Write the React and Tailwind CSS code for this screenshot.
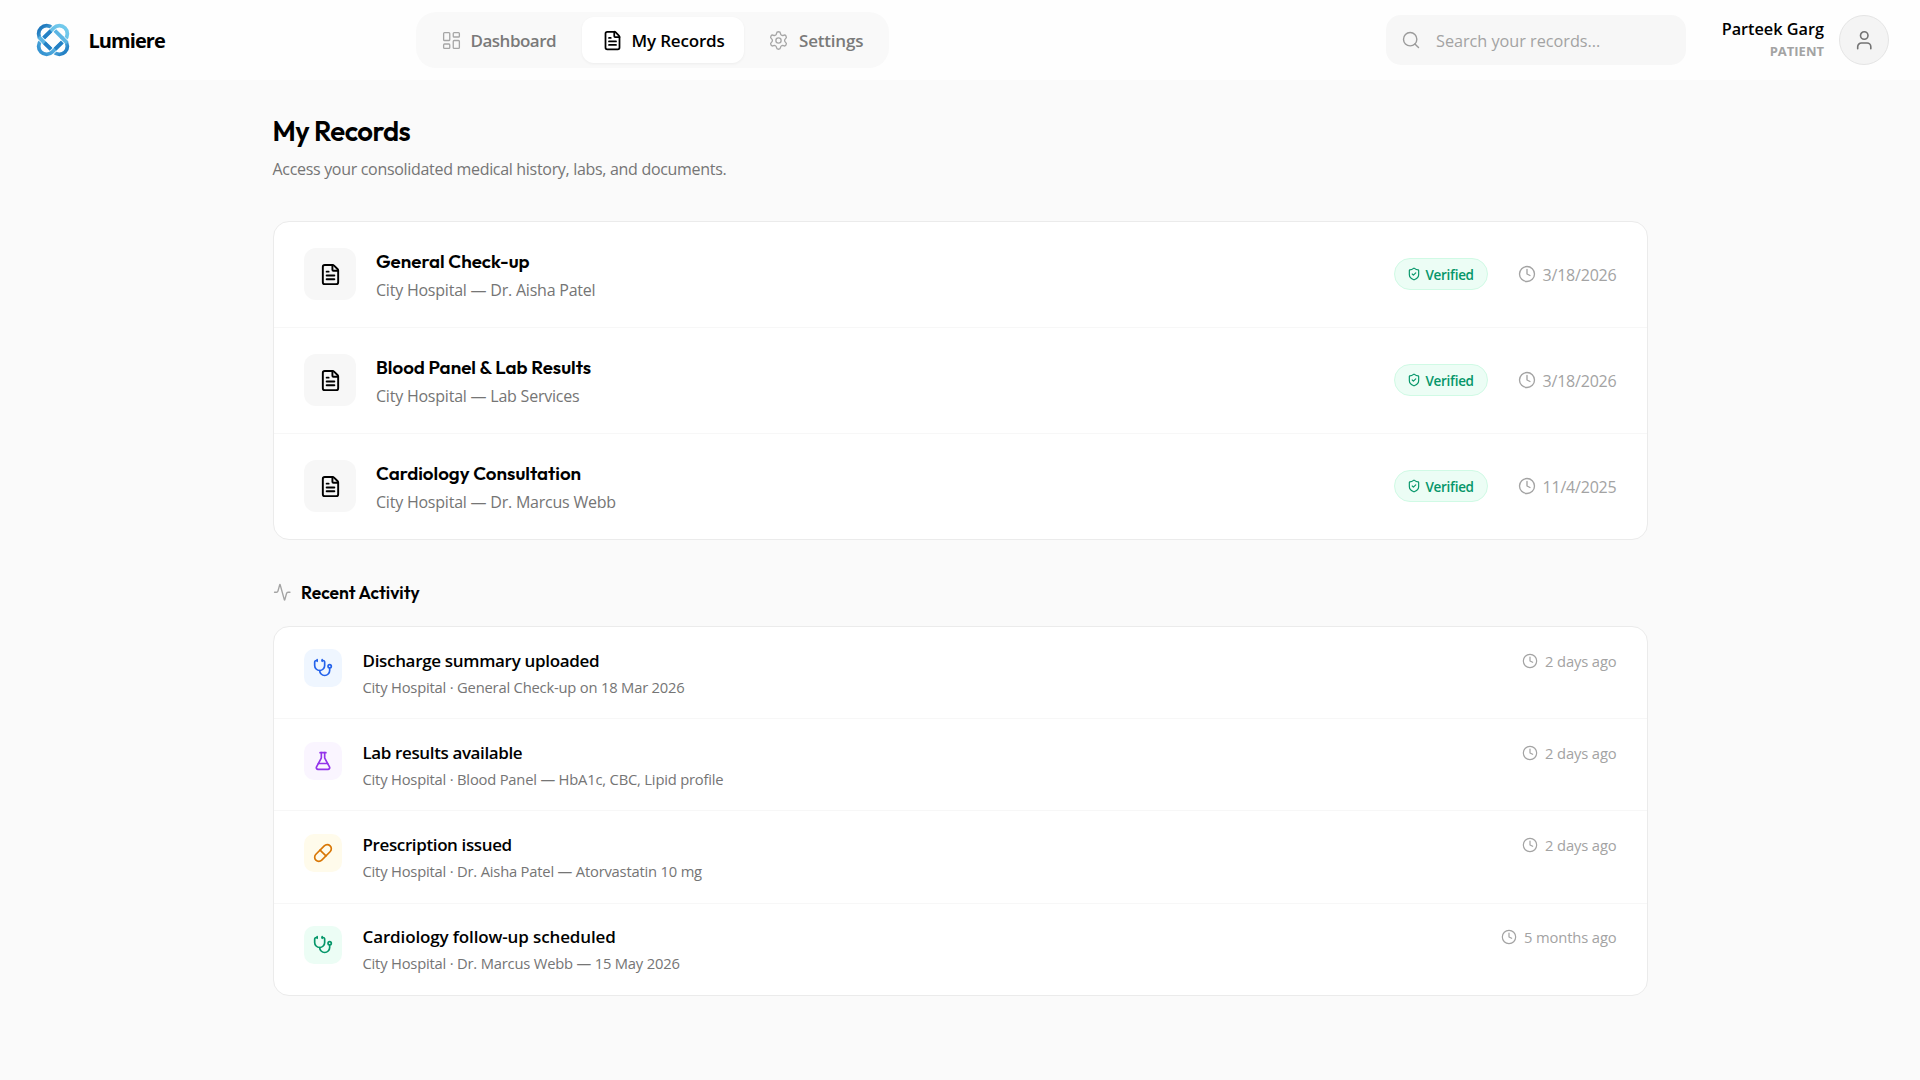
import React from 'react';
import {
  Activity,
  Clock,
  FileText,
  FlaskConical,
  LayoutDashboard,
  Pill,
  Search,
  Settings,
  ShieldCheck,
  Stethoscope,
  User,
} from 'lucide-react';

const records = [
  { title: 'General Check-up', source: 'City Hospital — Dr. Aisha Patel', date: '3/18/2026' },
  { title: 'Blood Panel & Lab Results', source: 'City Hospital — Lab Services', date: '3/18/2026' },
  { title: 'Cardiology Consultation', source: 'City Hospital — Dr. Marcus Webb', date: '11/4/2025' },
];

const activities = [
  {
    title: 'Discharge summary uploaded',
    tracking: 'tracking-[-0.32px]',
    detail: 'City Hospital · General Check-up on 18 Mar 2026',
    time: '2 days ago',
    icon: Stethoscope,
    color: 'bg-[#eff6ff] text-[#2563eb]',
  },
  {
    title: 'Lab results available',
    tracking: 'tracking-[-0.38px]',
    detail: 'City Hospital · Blood Panel — HbA1c, CBC, Lipid profile',
    time: '2 days ago',
    icon: FlaskConical,
    color: 'bg-[#faf5ff] text-[#9333ea]',
  },
  {
    title: 'Prescription issued',
    tracking: 'tracking-[-0.38px]',
    detail: 'City Hospital · Dr. Aisha Patel — Atorvastatin 10 mg',
    time: '2 days ago',
    icon: Pill,
    color: 'bg-[#fffbeb] text-[#d97706]',
  },
  {
    title: 'Cardiology follow-up scheduled',
    tracking: 'tracking-[-0.13px]',
    detail: 'City Hospital · Dr. Marcus Webb — 15 May 2026',
    time: '5 months ago',
    icon: Stethoscope,
    color: 'bg-[#ecfdf5] text-[#059669]',
  },
];

const Logo = () => (
  <svg width="34" height="34" viewBox="-17 -17 34 34" fill="none">
    <defs>
      <linearGradient id="falling" x1="-12" y1="-12" x2="12" y2="12" gradientUnits="userSpaceOnUse" gradientTransform="rotate(-45)">
        <stop offset="0" stopColor="#1f78bd" />
        <stop offset="0.35" stopColor="#5bb5e3" />
        <stop offset="0.7" stopColor="#5bb5e3" />
        <stop offset="1" stopColor="#2480c4" />
      </linearGradient>
      <linearGradient id="rising" x1="-12" y1="12" x2="12" y2="-12" gradientUnits="userSpaceOnUse" gradientTransform="rotate(45)">
        <stop offset="0" stopColor="#3593d1" />
        <stop offset="0.4" stopColor="#5bb5e3" />
        <stop offset="1" stopColor="#72caec" />
      </linearGradient>
    </defs>
    {/* loop from the top left to the bottom right */}
    <rect x="-17" y="-8" width="34" height="16" rx="8" transform="rotate(45)" stroke="url(#falling)" strokeWidth="3.8" />
    {/* loop from the bottom left to the top right, over the first */}
    <g transform="rotate(-45)">
      <path d="M-12 -8H12M-12 8H12" stroke="#fefefe" strokeWidth="5" />
      <rect x="-17" y="-8" width="34" height="16" rx="8" stroke="url(#rising)" strokeWidth="3.8" />
      <path d="M-5 -8H5M-5 8H5" stroke="#2480c4" strokeWidth="3.8" />
    </g>
    {/* the first loop comes back on top at two corners */}
    <g transform="rotate(45)">
      <path d="M-11 8H-5M5 -8H11" stroke="#fefefe" strokeWidth="5" />
      <path d="M-12 8H-4M4 -8H12" stroke="#5bb5e3" strokeWidth="3.8" />
      <path d="M-4 8H5" stroke="#2480c4" strokeWidth="3.8" />
    </g>
  </svg>
);

const Header = () => (
  <header className="flex h-20 items-center bg-[#fefefe] pr-[31px] pl-9">
    <div className="flex w-[380px] items-center gap-[18.5px]">
      <Logo />
      <span className="pt-0.5 text-[20px] leading-none font-bold tracking-[-0.95px]">Lumiere</span>
    </div>

    <nav className="flex h-14 items-center gap-1 rounded-[20px] bg-[#f9f9f9] px-[5px] text-[17px] font-semibold text-[#7a7a7a]">
      <a className="flex h-[46px] w-[157px] items-center gap-[9px] pl-[19.5px] tracking-[-0.5px]">
        <LayoutDashboard size={21} strokeWidth={1.5} className="text-[#a6a6a6]" />
        <span className="pt-px">Dashboard</span>
      </a>
      <a className="flex h-[46px] w-[162px] items-center gap-[9px] rounded-[12px] bg-white pl-[19.5px] tracking-[-0.18px] text-black shadow-[0_1px_3px_rgba(0,0,0,0.05)]">
        <FileText size={21} strokeWidth={2} />
        <span className="pt-px">My Records</span>
      </a>
      <a className="flex h-[46px] w-[136px] items-center gap-2.5 pl-5 tracking-[-0.2px]">
        <Settings size={21} strokeWidth={1.5} className="text-[#a6a6a6]" />
        <span className="pt-px">Settings</span>
      </a>
    </nav>

    <div className="ml-auto flex items-center">
      <div className="flex h-[50px] w-[300px] items-center gap-[15px] rounded-[15px] bg-[#f7f7f7] pl-[15px]">
        <Search size={20} strokeWidth={1.7} className="text-[#9b9b9b]" />
        <span className="pt-[3px] text-[16.25px] tracking-[-0.03px] text-[#a3a3a3]">Search your records...</span>
      </div>
      <div className="w-[138px] text-right">
        <p className="text-[16.25px] leading-[22px] font-semibold">Parteek Garg</p>
        <p className="text-[13px] leading-[22px] font-bold text-[#a3a3a3]">PATIENT</p>
      </div>
      <div className="ml-[15px] flex size-[50px] items-center justify-center rounded-full border border-[#e5e5e5] bg-[#f4f4f4]">
        <User size={22.5} strokeWidth={1.7} className="text-[#737373]" />
      </div>
    </div>
  </header>
);

const RecordRow = ({ title, source, date }) => (
  <div className="flex h-[106px] items-center border-b border-[#f7f7f7] px-[30px] pb-px last:h-[105px] last:border-b-0">
    <div className="flex size-[52px] items-center justify-center rounded-[12px] bg-[#f7f7f7] pl-px">
      <FileText size={23} strokeWidth={2} />
    </div>
    <div className="ml-[20.5px] flex-1 pt-px">
      <h3 className="font-['Outfit','Lato',sans-serif] text-[18.75px] leading-7 font-semibold">{title}</h3>
      <p className="mt-0.5 text-[16px] leading-[26px] tracking-[-0.22px] text-[#757575]">{source}</p>
    </div>
    <span className="flex h-8 w-[94px] items-center gap-[5px] rounded-full border border-[#d0fae5] bg-[#ecfdf5] pl-3 text-[13.5px] font-semibold tracking-[-0.3px] text-[#059669]">
      <ShieldCheck size={14} strokeWidth={2} />
      <span className="pt-[3px]">Verified</span>
    </span>
    <span className="ml-[30px] flex w-[99px] items-center justify-between text-[16px] tracking-[-0.2px] text-[#a3a3a3]">
      <Clock size={18} strokeWidth={1.8} />
      <span className="pt-0.5">{date}</span>
    </span>
  </div>
);

const ActivityRow = ({ title, tracking, detail, time, icon: Icon, color }) => (
  <div className="flex h-[92.2px] border-b border-[#f7f7f7] px-[30px] pt-[21.6px] last:h-[91px] last:border-b-0">
    <div className={`mt-[0.8px] flex size-[38px] shrink-0 items-center justify-center rounded-[10px] ${color}`}>
      <Icon size={20} strokeWidth={2} />
    </div>
    <div className="ml-[21px] flex-1">
      <h3 className={`text-[17px] leading-6 font-semibold ${tracking}`}>{title}</h3>
      <p className="mt-0.5 text-[14.75px] leading-6 tracking-[-0.2px] text-[#757575]">{detail}</p>
    </div>
    <span className="flex h-6 items-center gap-[7px] text-[14.75px] tracking-[-0.14px] text-[#a3a3a3]">
      <Clock size={16} strokeWidth={1.8} />
      {time}
    </span>
  </div>
);

const App = () => {
  return (
    <div className="h-screen overflow-hidden bg-[#fafafa] font-['Segoe_UI','Open_Sans',sans-serif] text-black">
      <Header />

      <main className="mx-auto w-[1375px] pt-[33px]">
        <h1 className="font-['Outfit','Lato',sans-serif] text-[27.5px] leading-9 font-semibold tracking-[-0.55px]">My Records</h1>
        <p className="mt-[7px] text-[16px] leading-[26px] tracking-[-0.31px] text-[#757575]">
          Access your consolidated medical history, labs, and documents.
        </p>

        <section className="mt-[39px] rounded-[16px] border border-[#ebebeb] bg-white">
          {records.map((record) => (
            <RecordRow key={record.title} {...record} />
          ))}
        </section>

        <div className="mt-[39px] flex h-7 items-center gap-2.5">
          <Activity size={18.5} strokeWidth={1.8} className="mb-px text-[#a3a3a3]" />
          <h2 className="font-['Outfit','Lato',sans-serif] text-[17.5px] font-semibold">Recent Activity</h2>
        </div>

        <section className="mt-[19px] rounded-[16px] border border-[#ebebeb] bg-white">
          {activities.map((activity) => (
            <ActivityRow key={activity.title} {...activity} />
          ))}
        </section>
      </main>
    </div>
  );
};

export default App;
